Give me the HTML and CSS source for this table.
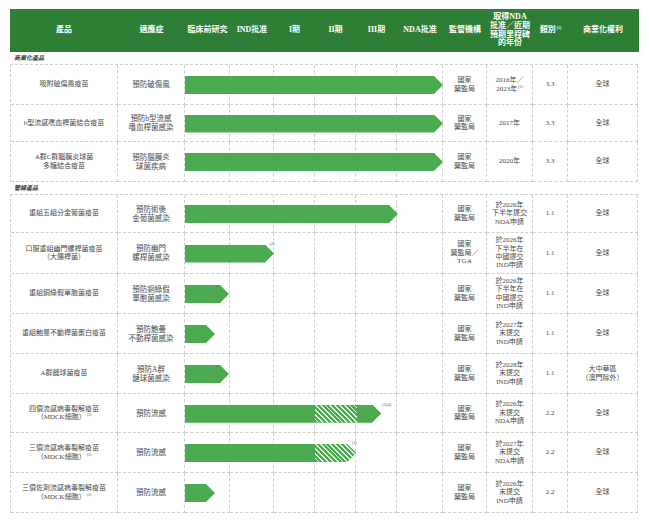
FILE: index.html
```html
<!DOCTYPE html>
<html lang="zh-Hant">
<head>
<meta charset="utf-8">
<title>產品管線</title>
<link rel="stylesheet" href="styles.css">
</head>
<body>
<div class="chart">
  <div class="grid head">
    <div>產品</div>
    <div>適應症</div>
    <div>臨床前研究</div>
    <div>IND批准</div>
    <div>I期</div>
    <div>II期</div>
    <div>III期</div>
    <div>NDA批准</div>
    <div>監管機構</div>
    <div>取得NDA<br>批准／近期<br>預期里程碑<br>的年份</div>
    <div><span>類別<sup>(5)</sup></span></div>
    <div>商業化權利</div>
  </div>

  <div class="section">商業化產品</div>
  <div class="group">
    <div class="grid row h40">
      <div class="cell prod">吸附破傷風疫苗</div>
      <div class="cell ind">預防破傷風</div>
      <div class="stages"><i></i><i></i><i></i><i></i><i></i><i></i></div>
      <div class="bar"><span class="shape" style="width:258px"></span></div>
      <div class="cell reg">國家<br>藥監局</div>
      <div class="cell yr"><span>2016年／<br>2023年<sup>(1)</sup></span></div>
      <div class="cell cat">3.3</div>
      <div class="cell rt">全球</div>
    </div>
    <div class="grid row h37">
      <div class="cell prod">b型流感嗜血桿菌結合疫苗</div>
      <div class="cell ind">預防b型流感<br>嗜血桿菌感染</div>
      <div class="stages"><i></i><i></i><i></i><i></i><i></i><i></i></div>
      <div class="bar"><span class="shape" style="width:258px"></span></div>
      <div class="cell reg">國家<br>藥監局</div>
      <div class="cell yr">2017年</div>
      <div class="cell cat">3.3</div>
      <div class="cell rt">全球</div>
    </div>
    <div class="grid row h40">
      <div class="cell prod">A群C群腦膜炎球菌<br>多糖結合疫苗</div>
      <div class="cell ind">預防腦膜炎<br>球菌疾病</div>
      <div class="stages"><i></i><i></i><i></i><i></i><i></i><i></i></div>
      <div class="bar"><span class="shape" style="width:258px"></span></div>
      <div class="cell reg">國家<br>藥監局</div>
      <div class="cell yr">2020年</div>
      <div class="cell cat">3.3</div>
      <div class="cell rt">全球</div>
    </div>
  </div>

  <div class="section">管線產品</div>
  <div class="group">
    <div class="grid row h38">
      <div class="cell prod">重組五組分金葡菌疫苗</div>
      <div class="cell ind">預防術後<br>金葡菌感染</div>
      <div class="stages"><i></i><i></i><i></i><i></i><i></i><i></i></div>
      <div class="bar"><span class="shape" style="width:213px"></span></div>
      <div class="cell reg">國家<br>藥監局</div>
      <div class="cell yr">於2026年<br>下半年提交<br>NDA申請</div>
      <div class="cell cat">1.1</div>
      <div class="cell rt">全球</div>
    </div>
    <div class="grid row h41">
      <div class="cell prod">口服重組幽門螺桿菌疫苗<br>（大腸桿菌）</div>
      <div class="cell ind">預防幽門<br>螺桿菌感染</div>
      <div class="stages"><i></i><i></i><i></i><i></i><i></i><i></i></div>
      <div class="bar"><span class="shape" style="width:89px"></span><span class="note">(2)</span></div>
      <div class="cell reg">國家<br>藥監局／<br>TGA</div>
      <div class="cell yr">於2026年<br>下半年在<br>中國提交<br>IND申請</div>
      <div class="cell cat">1.1</div>
      <div class="cell rt">全球</div>
    </div>
    <div class="grid row h40">
      <div class="cell prod">重組銅綠假單胞菌疫苗</div>
      <div class="cell ind">預防銅綠假<br>單胞菌感染</div>
      <div class="stages"><i></i><i></i><i></i><i></i><i></i><i></i></div>
      <div class="bar"><span class="shape" style="width:44px"></span></div>
      <div class="cell reg">國家<br>藥監局</div>
      <div class="cell yr">於2026年<br>下半年在<br>中國提交<br>IND申請</div>
      <div class="cell cat">1.1</div>
      <div class="cell rt">全球</div>
    </div>
    <div class="grid row h40">
      <div class="cell prod">重組鮑曼不動桿菌蛋白疫苗</div>
      <div class="cell ind">預防鮑曼<br>不動桿菌感染</div>
      <div class="stages"><i></i><i></i><i></i><i></i><i></i><i></i></div>
      <div class="bar"><span class="shape" style="width:30px"></span></div>
      <div class="cell reg">國家<br>藥監局</div>
      <div class="cell yr">於2027年<br>末提交<br>IND申請</div>
      <div class="cell cat">1.1</div>
      <div class="cell rt">全球</div>
    </div>
    <div class="grid row h40">
      <div class="cell prod">A群鏈球菌疫苗</div>
      <div class="cell ind">預防A群<br>鏈球菌感染</div>
      <div class="stages"><i></i><i></i><i></i><i></i><i></i><i></i></div>
      <div class="bar"><span class="shape" style="width:44px"></span></div>
      <div class="cell reg">國家<br>藥監局</div>
      <div class="cell yr">於2028年<br>末提交<br>IND申請</div>
      <div class="cell cat">1.1</div>
      <div class="cell rt">大中華區<br>（澳門除外）</div>
    </div>
    <div class="grid row h39">
      <div class="cell prod"><span>四價流感病毒裂解疫苗<br>（MDCK細胞）<sup>(5)</sup></span></div>
      <div class="cell ind">預防流感</div>
      <div class="stages"><i></i><i></i><i></i><i></i><i></i><i></i></div>
      <div class="bar"><span class="shape" style="width:196px"><i class="seg" style="width:130px"></i><i class="seg hatch" style="width:42px"></i><i class="seg fill"></i></span><span class="note after">(3)(4)</span></div>
      <div class="cell reg">國家<br>藥監局</div>
      <div class="cell yr">於2026年<br>末提交<br>NDA申請</div>
      <div class="cell cat">2.2</div>
      <div class="cell rt">全球</div>
    </div>
    <div class="grid row h40">
      <div class="cell prod"><span>三價流感病毒裂解疫苗<br>（MDCK細胞）<sup>(5)</sup></span></div>
      <div class="cell ind">預防流感</div>
      <div class="stages"><i></i><i></i><i></i><i></i><i></i><i></i></div>
      <div class="bar"><span class="shape" style="width:171px"><i class="seg" style="width:130px"></i><i class="seg hatch fill"></i></span><span class="note">(3)</span></div>
      <div class="cell reg">國家<br>藥監局</div>
      <div class="cell yr">於2027年<br>末提交<br>NDA申請</div>
      <div class="cell cat">2.2</div>
      <div class="cell rt">全球</div>
    </div>
    <div class="grid row h40">
      <div class="cell prod"><span>三價佐劑流感病毒裂解疫苗<br>（MDCK細胞）<sup>(5)</sup></span></div>
      <div class="cell ind">預防流感</div>
      <div class="stages"><i></i><i></i><i></i><i></i><i></i><i></i></div>
      <div class="bar"><span class="shape" style="width:30px"></span></div>
      <div class="cell reg">國家<br>藥監局</div>
      <div class="cell yr">於2026年<br>末提交<br>IND申請</div>
      <div class="cell cat">2.2</div>
      <div class="cell rt">全球</div>
    </div>
  </div>
</div>
</body>
</html>
```

FILE: styles.css
```css
* { box-sizing: border-box; }
html, body { background: #ffffff; }
body {
  margin: 0;
  font-family: "Liberation Serif", "Noto Sans CJK TC", serif;
  color: #4a4a4a;
}
.chart {
  margin: 9px 0 0 10px;
  width: 629px;
}
.grid {
  display: grid;
  grid-template-columns: 108px 67px 45px 44px 41px 41px 41px 46px 44px 46px 35px 70px;
}
.head {
  height: 43px;
  background: #2f7e35;
  color: #ffffff;
  font-size: 8px;
  font-weight: bold;
  line-height: 8.6px;
}
.head > div {
  display: flex;
  align-items: center;
  justify-content: center;
  text-align: center;
}
sup {
  font-size: 4px;
  line-height: 0;
  vertical-align: 3px;
  margin-left: 1px;
}
.section {
  height: 12px;
  padding-left: 4px;
  font-size: 6px;
  line-height: 12px;
  font-style: italic;
  font-weight: bold;
  color: #333333;
}
.group {
  border-top: 1px dashed #cfcfcf;
  border-left: 1px dashed #cfcfcf;
  width: 628px;
}
.group .grid {
  grid-template-columns: 107px 67px 45px 44px 41px 41px 41px 46px 44px 46px 35px 70px;
}
.h37 { height: 37px; }
.h38 { height: 38px; }
.h39 { height: 39px; }
.h40 { height: 40px; }
.h41 { height: 41px; }
.row > * { grid-row: 1; }
.cell {
  display: flex;
  align-items: center;
  justify-content: center;
  text-align: center;
  border-right: 1px dashed #cfcfcf;
  border-bottom: 1px dashed #cfcfcf;
  font-size: 7px;
  line-height: 8.4px;
}
.prod { grid-column: 1; }
.ind { grid-column: 2; font-size: 7.5px; line-height: 9px; }
.reg { grid-column: 9; }
.yr { grid-column: 10; }
.cat { grid-column: 11; }
.rt { grid-column: 12; }
.stages {
  grid-column: 3 / 9;
  display: grid;
  grid-template-columns: 45px 44px 41px 41px 41px 46px;
}
.stages > i {
  border-right: 1px dashed #cfcfcf;
  border-bottom: 1px dashed #cfcfcf;
}
.bar {
  grid-column: 3 / 9;
  align-self: center;
  justify-self: start;
  display: flex;
  align-items: flex-start;
}
.shape {
  display: flex;
  height: 18px;
  background: #4cab50;
  clip-path: polygon(0 0, calc(100% - 9px) 0, 100% 50%, calc(100% - 9px) 100%, 0 100%);
}
.seg {
  display: block;
  height: 100%;
  background: #4cab50;
}
.seg.fill { flex: 1; }
.hatch {
  background: repeating-linear-gradient(45deg, #4cab50 0 2.2px, #e2f2e2 2.2px 3.4px);
}
.note {
  font-size: 4px;
  line-height: 4px;
  margin-top: -3px;
  margin-left: -4px;
  color: #555555;
}
.note.after { margin-left: 1px; margin-top: -2px; }
```
